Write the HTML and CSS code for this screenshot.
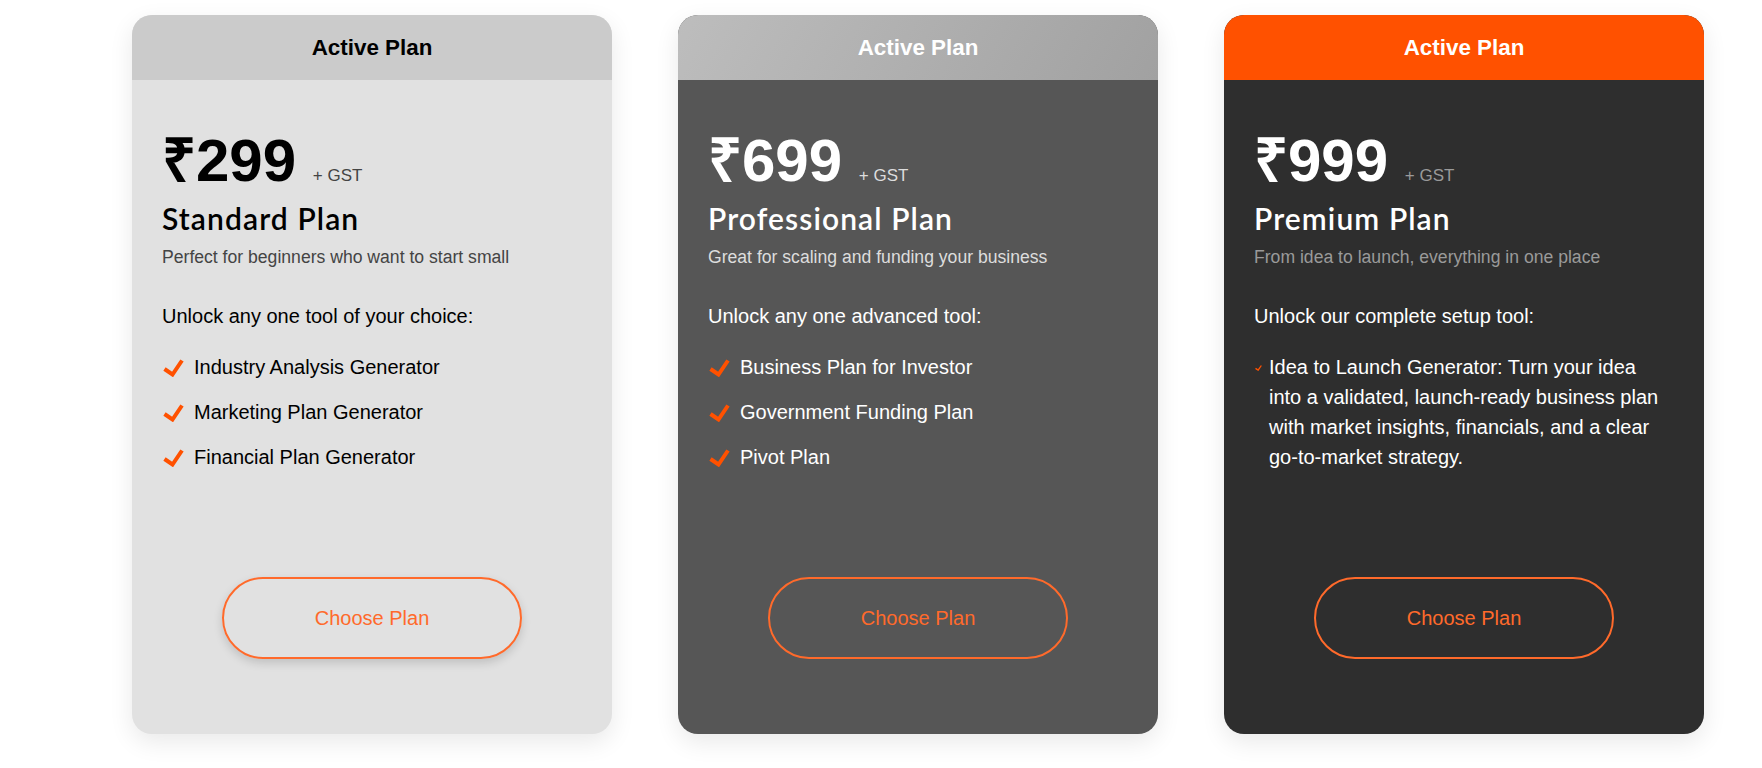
FILE: index.html
```html
<!DOCTYPE html>
<html lang="en">

<head>
    <meta charset="UTF-8">
    <meta name="viewport" content="width=device-width, initial-scale=1.0">
    <title>Pricing Plans</title>
    <link rel="stylesheet" href="styles.css">
</head>

<body>
    <!-- Pricing cards -->
    <div class="plans">

        <!-- Standard -->
        <div class="plan-card plan-standard">
            <div class="plan-badge">Active Plan</div>
            <div class="plan-body">
                <div class="plan-price">₹299 <span class="plan-tax">+ GST</span></div>
                <h2 class="plan-name">Standard Plan</h2>
                <p class="plan-desc">Perfect for beginners who want to start small</p>
                <p class="plan-intro">Unlock any one tool of your choice:</p>
                <ul class="plan-features">
                    <li><svg class="check" viewBox="0 0 21 18"><polyline points="1.5,10 9.5,15.5 19,1.5" /></svg><span>Industry Analysis Generator</span></li>
                    <li><svg class="check" viewBox="0 0 21 18"><polyline points="1.5,10 9.5,15.5 19,1.5" /></svg><span>Marketing Plan Generator</span></li>
                    <li><svg class="check" viewBox="0 0 21 18"><polyline points="1.5,10 9.5,15.5 19,1.5" /></svg><span>Financial Plan Generator</span></li>
                </ul>
                <button type="button" class="choose-btn">Choose Plan</button>
            </div>
        </div>

        <!-- Professional -->
        <div class="plan-card plan-pro">
            <div class="plan-badge">Active Plan</div>
            <div class="plan-body">
                <div class="plan-price">₹699 <span class="plan-tax">+ GST</span></div>
                <h2 class="plan-name">Professional Plan</h2>
                <p class="plan-desc">Great for scaling and funding your business</p>
                <p class="plan-intro">Unlock any one advanced tool:</p>
                <ul class="plan-features">
                    <li><svg class="check" viewBox="0 0 21 18"><polyline points="1.5,10 9.5,15.5 19,1.5" /></svg><span>Business Plan for Investor</span></li>
                    <li><svg class="check" viewBox="0 0 21 18"><polyline points="1.5,10 9.5,15.5 19,1.5" /></svg><span>Government Funding Plan</span></li>
                    <li><svg class="check" viewBox="0 0 21 18"><polyline points="1.5,10 9.5,15.5 19,1.5" /></svg><span>Pivot Plan</span></li>
                </ul>
                <button type="button" class="choose-btn">Choose Plan</button>
            </div>
        </div>

        <!-- Premium -->
        <div class="plan-card plan-premium">
            <div class="plan-badge">Active Plan</div>
            <div class="plan-body">
                <div class="plan-price">₹999 <span class="plan-tax">+ GST</span></div>
                <h2 class="plan-name">Premium Plan</h2>
                <p class="plan-desc">From idea to launch, everything in one place</p>
                <p class="plan-intro">Unlock our complete setup tool:</p>
                <ul class="plan-features">
                    <li><svg class="check check-small" viewBox="0 0 21 18"><polyline points="1.5,10 9.5,15.5 19,1.5" /></svg><span>Idea to Launch Generator: Turn your idea into a validated, launch-ready business plan with market insights, financials, and a clear go-to-market strategy.</span></li>
                </ul>
                <button type="button" class="choose-btn">Choose Plan</button>
            </div>
        </div>

    </div>
</body>

</html>
```

FILE: styles.css
```css
body {
    font-family: 'Liberation Sans', Arial, sans-serif;
    margin: 0;
    padding: 0;
    background-color: #fff;
    color: #000;
}

/* Row of pricing cards */
.plans {
    display: flex;
    gap: 66px;
    padding: 15px 57px 34px 132px;
}

.plan-card {
    width: 480px;
    height: 719px;
    border-radius: 20px;
    overflow: hidden;
    display: flex;
    flex-direction: column;
    box-shadow: 0 8px 24px rgba(0, 0, 0, 0.09);
}

/* Top badge */
.plan-badge {
    height: 65px;
    line-height: 65px;
    text-align: center;
    font-size: 1.4rem;
    font-weight: bold;
    flex-shrink: 0;
}

.plan-body {
    flex: 1;
    display: flex;
    flex-direction: column;
    padding: 56px 30px 75px 30px;
}

.plan-price {
    font-size: 60px;
    font-weight: bold;
    line-height: 50px;
}

.plan-tax {
    font-size: 17px;
    font-weight: normal;
}

.plan-name {
    font-family: Lato, 'Noto Sans', sans-serif;
    font-size: 30px;
    font-weight: 600;
    letter-spacing: 1.1px;
    line-height: 34px;
    margin: 0;
}

.plan-desc {
    font-size: 1.1rem;
    margin: 12px 0 0 0;
}

.plan-intro {
    font-size: 20px;
    margin: 37px 0 0 0;
}

.plan-features {
    list-style: none;
    padding: 0;
    margin: 24px 0 0 0;
}

.plan-features li {
    display: flex;
    align-items: flex-start;
    gap: 10px;
    font-size: 20px;
    line-height: 30px;
    margin-bottom: 15px;
}

.check {
    width: 21px;
    height: 18px;
    margin-top: 7px;
    margin-left: 1px;
    flex-shrink: 0;
    fill: none;
    stroke: #ff5100;
    stroke-width: 4;
}

.check-small {
    width: 7px;
    height: 6px;
    margin-top: 13px;
}

/* Choose plan button */
.choose-btn {
    margin-top: auto;
    align-self: center;
    width: 300px;
    height: 82px;
    border: 2px solid #ff6a2b;
    border-radius: 41px;
    background: transparent;
    color: #ff6a2b;
    font-family: 'Liberation Sans', Arial, sans-serif;
    font-size: 20px;
    cursor: pointer;
}

/* Standard card colours */
.plan-standard {
    background-color: #e1e1e1;
}

.plan-standard .plan-badge {
    background-color: #cbcbcb;
    color: #000;
}

.plan-standard .plan-tax,
.plan-standard .plan-desc {
    color: #444;
}

.plan-standard .choose-btn {
    box-shadow: 0 4px 10px rgba(0, 0, 0, 0.15);
}

/* Professional card colours */
.plan-pro {
    background-color: #565656;
    color: #fff;
}

.plan-pro .plan-badge {
    background: linear-gradient(120deg, #bdbdbd, #a1a1a1);
    color: #fff;
}

.plan-pro .plan-tax,
.plan-pro .plan-desc {
    color: #ddd;
}

/* Premium card colours */
.plan-premium {
    background-color: #2e2e2e;
    color: #fff;
}

.plan-premium .plan-badge {
    background-color: #ff5100;
    color: #fff;
}

.plan-premium .plan-tax,
.plan-premium .plan-desc {
    color: #9a9a9a;
}

.plan-premium .plan-features {
    padding-right: 15px;
}

.plan-premium .plan-features li {
    gap: 7px;
}
```
